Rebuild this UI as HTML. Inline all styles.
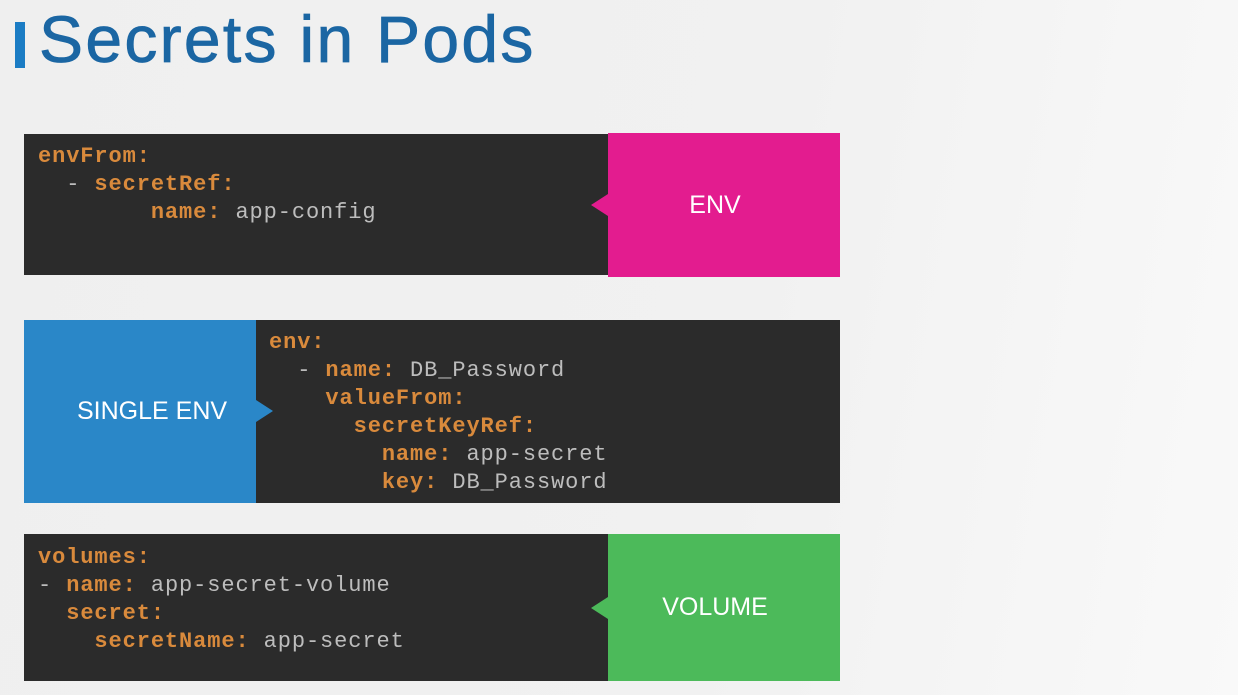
<!DOCTYPE html>
<html><head><style>
body{margin:0;width:1238px;height:695px;overflow:hidden;background:linear-gradient(100deg,#efefef 0%,#f1f1f1 60%,#f9f9f9 100%);position:relative;font-family:"Liberation Sans",sans-serif}
.bar{position:absolute;left:15px;top:22px;width:10px;height:46px;background:#1b7cc4}
h1{position:absolute;left:39px;top:1px;margin:0;font-size:66px;font-weight:normal;color:#1b66a3;letter-spacing:2.3px;-webkit-text-stroke:0.8px #1b66a3}
.dark{position:absolute;background:#2b2b2b}
.code{position:absolute;font-family:"Liberation Mono",monospace;font-size:22px;letter-spacing:0.9px;line-height:28px;color:#bdbdbd;white-space:pre;font-weight:normal}
.code b{color:#d98a3c}
.lab{position:absolute;color:#fff;font-size:25px;display:flex;align-items:center;justify-content:center;box-sizing:border-box}
.tri{position:absolute;width:0;height:0}
</style></head><body>
<div class="bar"></div>
<h1>Secrets in Pods</h1>

<div class="dark" style="left:24px;top:134px;width:584px;height:141px"></div>
<div class="code" style="left:38px;top:143px"><b>envFrom:</b>
  - <b>secretRef:</b>
        <b>name:</b> app-config</div>
<div class="lab" style="left:608px;top:133px;width:232px;height:144px;background:#e31c8f;padding-right:18px">ENV</div>
<div class="tri" style="left:591px;top:194px;border-top:11px solid transparent;border-bottom:11px solid transparent;border-right:17px solid #e31c8f"></div>

<div class="lab" style="left:24px;top:320px;width:232px;height:183px;background:#2a87c8;justify-content:flex-start"><span style="margin-left:53px">SINGLE ENV</span></div>
<div class="dark" style="left:256px;top:320px;width:584px;height:183px"></div>
<div class="tri" style="left:256px;top:400px;border-top:11px solid transparent;border-bottom:11px solid transparent;border-left:17px solid #2a87c8"></div>
<div class="code" style="left:269px;top:329px"><b>env:</b>
  - <b>name:</b> DB_Password
    <b>valueFrom:</b>
      <b>secretKeyRef:</b>
        <b>name:</b> app-secret
        <b>key:</b> DB_Password</div>

<div class="dark" style="left:24px;top:534px;width:584px;height:147px"></div>
<div class="code" style="left:38px;top:544px"><b>volumes:</b>
- <b>name:</b> app-secret-volume
  <b>secret:</b>
    <b>secretName:</b> app-secret</div>
<div class="lab" style="left:608px;top:534px;width:232px;height:147px;background:#4cba5a;padding-right:18px">VOLUME</div>
<div class="tri" style="left:591px;top:597px;border-top:11px solid transparent;border-bottom:11px solid transparent;border-right:17px solid #4cba5a"></div>
</body></html>
